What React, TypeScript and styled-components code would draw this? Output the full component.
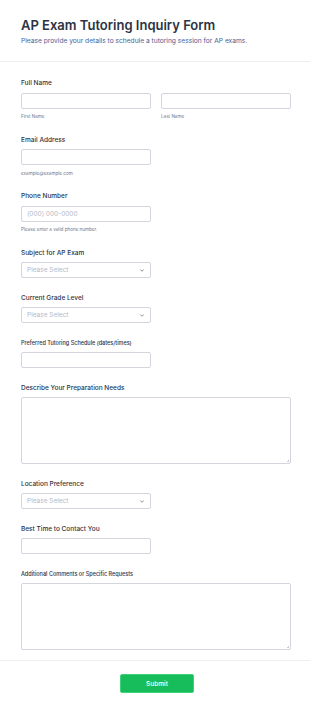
import styled, { createGlobalStyle } from "styled-components";

const GlobalStyle = createGlobalStyle`
  * {
    box-sizing: border-box;
  }
  body {
    margin: 0;
    background: #ffffff;
    font-family: Inter, "Noto Sans", sans-serif;
    color: #2c3345;
  }
`;

const Page = styled.div`
  width: 310px;
  min-height: 710px;
  background: #ffffff;
`;

const Header = styled.header`
  padding: 17.6px 21px 16px;
  border-bottom: 1px solid #eceef2;
`;

const Title = styled.h1`
  margin: 0;
  font-size: 13px;
  line-height: 15.6px;
  font-weight: 600;
  color: #2c3345;
`;

const Subtitle = styled.p`
  margin: 3.8px 0 0;
  font-size: 6.65px;
  line-height: 8px;
  color: #4b5e92;
`;

const Form = styled.form`
  display: flex;
  flex-direction: column;
  gap: 15.6px;
  padding: 17.4px 19px 10.3px 21px;
`;

const Field = styled.div`
  display: flex;
  flex-direction: column;
`;

const Label = styled.label<{ $small?: boolean }>`
  font-size: ${(p) => (p.$small ? "5.5px" : "6.5px")};
  line-height: 8px;
  font-weight: 500;
  color: #2c3345;
  margin-bottom: 5.4px;
`;

const Row = styled.div`
  display: grid;
  grid-template-columns: 130px 130px;
  column-gap: 10px;
`;

const Column = styled.div`
  display: flex;
  flex-direction: column;
`;

const Input = styled.input<{ $full?: boolean }>`
  display: block;
  width: ${(p) => (p.$full ? "270px" : "130px")};
  height: 16px;
  padding: 0 5px;
  border: 1px solid #d3d6df;
  border-radius: 2px;
  background: #ffffff;
  font-family: Inter, "Noto Sans", sans-serif;
  font-size: 6.5px;
  color: #2c3345;
  outline: none;
  &::placeholder {
    color: #b4b9c6;
  }
`;

const SelectBox = styled.div`
  display: flex;
  align-items: center;
  justify-content: space-between;
  width: 130px;
  height: 16px;
  padding: 0 6px 0 5px;
  border: 1px solid #d3d6df;
  border-radius: 2px;
  background: #ffffff;
`;

const Placeholder = styled.span`
  font-size: 6.5px;
  line-height: 8px;
  color: #b4b9c6;
`;

const TextArea = styled.textarea`
  display: block;
  width: 270px;
  height: 67px;
  padding: 5px;
  border: 1px solid #d3d6df;
  border-radius: 2px;
  font-family: Inter, "Noto Sans", sans-serif;
  font-size: 6.5px;
  outline: none;
  resize: both;
  &::-webkit-resizer {
    background: linear-gradient(135deg, transparent 0 68%, #c9cdd6 68% 76%, transparent 76% 84%, #c9cdd6 84% 92%, transparent 92%);
    background-size: 4px 4px;
    background-position: right 1px bottom 1px;
    background-repeat: no-repeat;
  }
`;

const SubLabel = styled.span`
  margin-top: 5.5px;
  font-size: 4.6px;
  line-height: 6px;
  color: #6f7890;
`;

const Footer = styled.footer`
  display: flex;
  justify-content: center;
  padding: 12.5px 0 16px 4px;
  border-top: 1px solid #eceef2;
`;

const SubmitButton = styled.button`
  width: 74px;
  height: 19.5px;
  border: 1px solid #3fd07a;
  border-radius: 2px;
  background: #18bd5b;
  color: #ffffff;
  font-family: Inter, "Noto Sans", sans-serif;
  font-size: 6.5px;
  font-weight: 500;
  cursor: pointer;
`;

const Chevron = () => (
  <svg width="4" height="3" viewBox="0 0 8 6" fill="none">
    <path d="M1 1.5 L4 4.5 L7 1.5" stroke="#6b7280" strokeWidth="1.6" strokeLinecap="round" strokeLinejoin="round" />
  </svg>
);

const Select = () => (
  <SelectBox>
    <Placeholder>Please Select</Placeholder>
    <Chevron />
  </SelectBox>
);

const App = () => {
  return (
    <Page>
      <GlobalStyle />
      <Header>
        <Title>AP Exam Tutoring Inquiry Form</Title>
        <Subtitle>Please provide your details to schedule a tutoring session for AP exams.</Subtitle>
      </Header>
      <Form>
        <Field>
          <Label>Full Name</Label>
          <Row>
            <Column>
              <Input />
              <SubLabel>First Name</SubLabel>
            </Column>
            <Column>
              <Input />
              <SubLabel>Last Name</SubLabel>
            </Column>
          </Row>
        </Field>
        <Field>
          <Label>Email Address</Label>
          <Input type="email" />
          <SubLabel>example@example.com</SubLabel>
        </Field>
        <Field>
          <Label>Phone Number</Label>
          <Input placeholder="(000) 000-0000" />
          <SubLabel>Please enter a valid phone number.</SubLabel>
        </Field>
        <Field>
          <Label>Subject for AP Exam</Label>
          <Select />
        </Field>
        <Field>
          <Label>Current Grade Level</Label>
          <Select />
        </Field>
        <Field>
          <Label $small>Preferred Tutoring Schedule (dates/times)</Label>
          <Input />
        </Field>
        <Field>
          <Label>Describe Your Preparation Needs</Label>
          <TextArea />
        </Field>
        <Field>
          <Label>Location Preference</Label>
          <Select />
        </Field>
        <Field>
          <Label>Best Time to Contact You</Label>
          <Input />
        </Field>
        <Field>
          <Label $small>Additional Comments or Specific Requests</Label>
          <TextArea />
        </Field>
      </Form>
      <Footer>
        <SubmitButton type="button">Submit</SubmitButton>
      </Footer>
    </Page>
  );
};

export default App;
